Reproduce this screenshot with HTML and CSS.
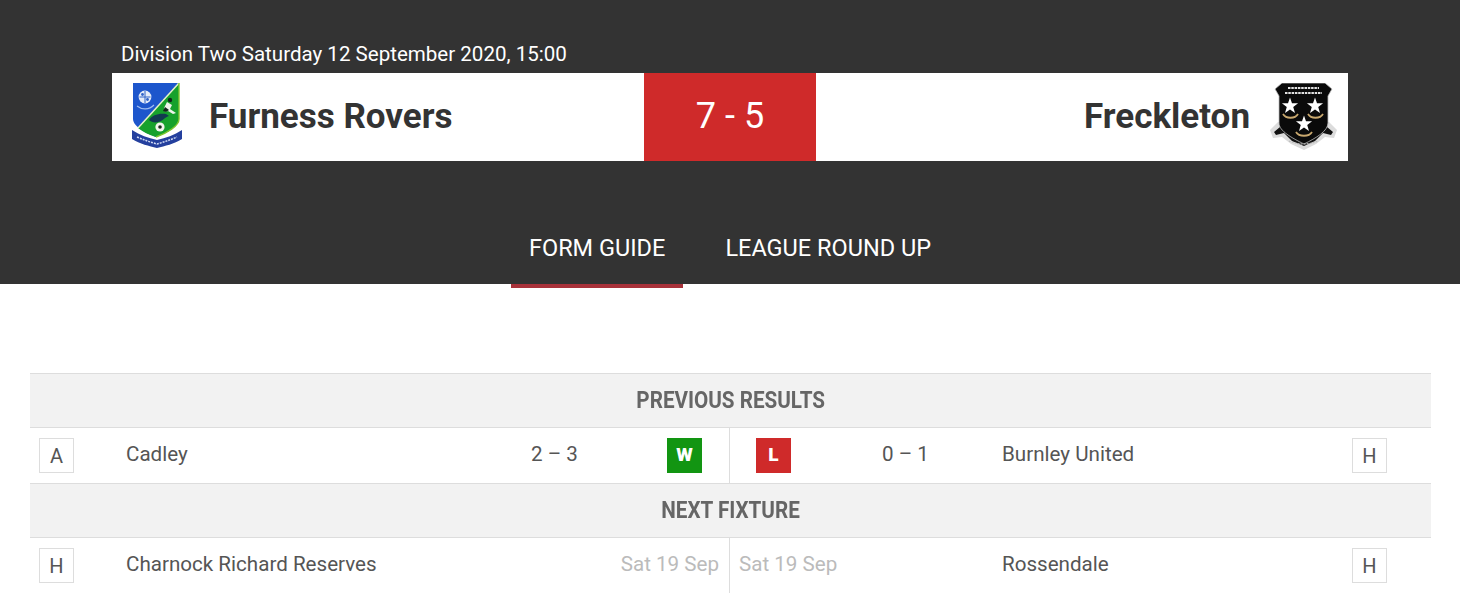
FILE: index.html
```html
<!DOCTYPE html>
<html lang="en">
<head>
<meta charset="utf-8">
<title>Furness Rovers v Freckleton</title>
<link rel="stylesheet" href="styles.css">
</head>
<body>
<header class="hero">
  <div class="match">
    <p class="meta">Division Two Saturday 12 September 2020, 15:00</p>
    <div class="board">
      <div class="team team-home">
        <svg class="crest crest-home" viewBox="0 0 50 65" aria-hidden="true">
          <path d="M1 0H47V36C47 43 35 50 24 54C13 50 1 43 1 36Z" fill="#1d56cc"/>
          <path d="M47 0V36C47 43 35 50 24 54C17 52 11 49 6 45Z" fill="#16a12c"/>
          <path d="M47 0L6 45" stroke="#e6f2c8" stroke-width="1.5"/>
          <path d="M47 0V36C47 43 35 50 24 54" fill="none" stroke="#7cc52e" stroke-width="1.4"/>
          <circle cx="13" cy="14" r="6.400" fill="#e4ebf8"/>
          <path d="M13 8V20M7.500 14H18.500" stroke="#2f62c8" stroke-width="1"/>
          <circle cx="10.500" cy="11.500" r="1.400" fill="#2f62c8"/>
          <circle cx="15.500" cy="16.500" r="1.400" fill="#2f62c8"/>
          <path d="M5 23C10 27 17 27 22 22" stroke="#9fbcf0" stroke-width="1.1" fill="none"/>
          <path d="M35 19L40 22L38 26L44 30L41 31L36 28L33 29L32 25Z" fill="#eef3ea"/>
          <circle cx="38" cy="17" r="2.200" fill="#10261a"/>
          <path d="M33 24L37 27L34 29L31 28Z" fill="#10261a"/>
          <path d="M17 37C20 32 27 30 34 31L37 33C33 34 31 38 26 39C23 40 19 39 17 37Z" fill="#123a50"/>
          <circle cx="28" cy="44" r="4.600" fill="#f2f5ee"/>
          <circle cx="28" cy="44" r="1.800" fill="#1a2a1c"/>
          <path d="M0 47C8 52 16 55 25 57C34 55 42 52 50 47L50 56C42 61 33 63 25 65C17 63 8 61 0 56Z" fill="#24409e"/>
          <path d="M5 54C12 57 18 59 25 61C32 59 38 57 45 54" stroke="#cfd9f4" stroke-width="1.500" stroke-dasharray="2 1" fill="none"/>
        </svg>
        <span class="team-name">Furness Rovers</span>
      </div>
      <div class="score">7 - 5</div>
      <div class="team team-away">
        <span class="team-name">Freckleton</span>
        <svg class="crest crest-away" viewBox="0 0 67 67" aria-hidden="true">
          <defs>
            <path id="star" d="M0-8.500L2-2.750L8.080-2.630L3.230 1.050L5 6.880L0 3.400L-5 6.880L-3.230 1.050L-8.080-2.630L-2-2.750Z"/>
          </defs>
          <path d="M0 47L8 39L59 39L67 47L64 55L55 54L46 61L34 67L21 61L12 54L3 55Z" fill="#dcdcdc"/>
          <path d="M4 49L10 44L57 44L63 49L61 52L53 50L45 58L34 63L22 58L14 50L6 52Z" fill="#111"/>
          <path d="M12 0H55L62 6L58 13V40C58 48 46 55 34 61C22 55 9 48 9 40V13L5 6Z" fill="#0a0a0a" stroke="#bdbdbd" stroke-width=".8"/>
          <path d="M18 5H49M15 10H52" stroke="#e2e2e2" stroke-width="1.800" stroke-dasharray="2.500 .8"/>
          <use href="#star" x="20" y="23" fill="#fff"/>
          <use href="#star" x="45" y="23" fill="#fff"/>
          <use href="#star" x="34" y="41" fill="#fff"/>
          <path d="M13 31C16 36 25 36 28 31M38 31C41 36 50 36 53 31M26 49C29 54 39 54 42 49" stroke="#c9a86e" stroke-width="1.800" fill="none"/>
          <path d="M19 58C27 62 40 62 48 58" stroke="#bdbdbd" stroke-width="1.200" stroke-dasharray="2 1" fill="none"/>
        </svg>
      </div>
    </div>
  </div>
  <nav class="tabs">
    <a class="tab tab-active">FORM GUIDE</a>
    <a class="tab">LEAGUE ROUND UP</a>
  </nav>
</header>
<main class="form">
  <h2 class="section"><span class="section-text">PREVIOUS RESULTS</span></h2>
  <div class="row">
    <div class="half result-left">
      <span class="venue">A</span>
      <span class="name">Cadley</span>
      <span class="goals">2 – 3</span>
      <span class="outcome win">W</span>
    </div>
    <div class="half result-right">
      <span class="outcome loss">L</span>
      <span class="goals">0 – 1</span>
      <span class="name">Burnley United</span>
      <span class="venue">H</span>
    </div>
  </div>
  <h2 class="section"><span class="section-text">NEXT FIXTURE</span></h2>
  <div class="row">
    <div class="half next-left">
      <span class="venue">H</span>
      <span class="name">Charnock Richard Reserves</span>
      <span class="date">Sat 19 Sep</span>
    </div>
    <div class="half next-right">
      <span class="date">Sat 19 Sep</span>
      <span class="name">Rossendale</span>
      <span class="venue">H</span>
    </div>
  </div>
</main>
</body>
</html>
```

FILE: styles.css
```css
* { box-sizing: border-box; }
html, body { margin: 0; height: 603px; overflow: hidden; }
body { background: #fff; font-family: Roboto, "Liberation Sans", sans-serif; color: #555; }

.hero { height: 284px; background: #333; padding: 0 112px; display: flex; flex-direction: column; }
.match { padding-top: 41px; }
.meta { margin: 0 0 7px 9px; height: 25px; font-size: 20.55px; line-height: 27px; color: #fff; }
.board { height: 88px; background: #fff; display: grid; grid-template-columns: 532px 172px 532px; }
.team { display: flex; align-items: center; color: #333; }
.team-home { padding-left: 20px; gap: 27px; }
.team-away { justify-content: flex-end; padding-right: 11px; gap: 20px; }
.team-name { font-size: 35px; font-weight: 700; line-height: 40px; }
.crest { display: block; filter: blur(.4px); }
.crest-home { width: 50px; height: 65px; margin-bottom: 3px; }
.crest-away { width: 67px; height: 67px; margin-bottom: 1px; }
.score { background: #cf2a2a; color: #fff; font-size: 36px; line-height: 87px; text-align: center; }

.tabs { display: flex; justify-content: center; margin-top: 58px; height: 65px; }
.tab { display: block; height: 69px; padding: 14px 18px 0; font-size: 23.5px; line-height: 30px; color: #fff; }
.tab-active { border-bottom: 4px solid #a8323a; }
.tab + .tab { margin-left: 24px; }

.form { margin: 89px 29px 0 30px; }
.section { margin: 0; height: 55px; background: #f2f2f2; border-top: 1px solid #ddd; border-bottom: 1px solid #ddd; text-align: center; font-size: 24px; font-weight: 700; line-height: 52px; color: #666; }
.section-text { display: inline-block; transform: scaleX(.86); white-space: nowrap; }
.row { display: grid; grid-template-columns: 699px 702px; height: 55px; font-size: 20.6px; line-height: 28px; }
.half { display: grid; align-items: center; }
.half + .half { border-left: 1px solid #ddd; }
.result-left { grid-template-columns: 87px 405px 136px 35px; padding-left: 9px; }
.result-right { grid-template-columns: 126px 120px 350px 35px; padding-left: 26px; }
.next-left { grid-template-columns: 87px 1fr auto; padding: 0 10px 0 9px; }
.next-right { grid-template-columns: 263px 350px 35px; padding-left: 9px; }
.venue { width: 35px; height: 35px; border: 1px solid #ddd; text-align: center; font-size: 20px; line-height: 34px; color: #555; }
.name, .goals, .date { padding-bottom: 4px; }
.date { color: #bbb; }
.outcome { width: 35px; height: 35px; color: #fff; font-weight: 900; font-size: 19px; line-height: 34px; text-align: center; }
.win { background: #129512; }
.loss { background: #cf2a2a; }
```
